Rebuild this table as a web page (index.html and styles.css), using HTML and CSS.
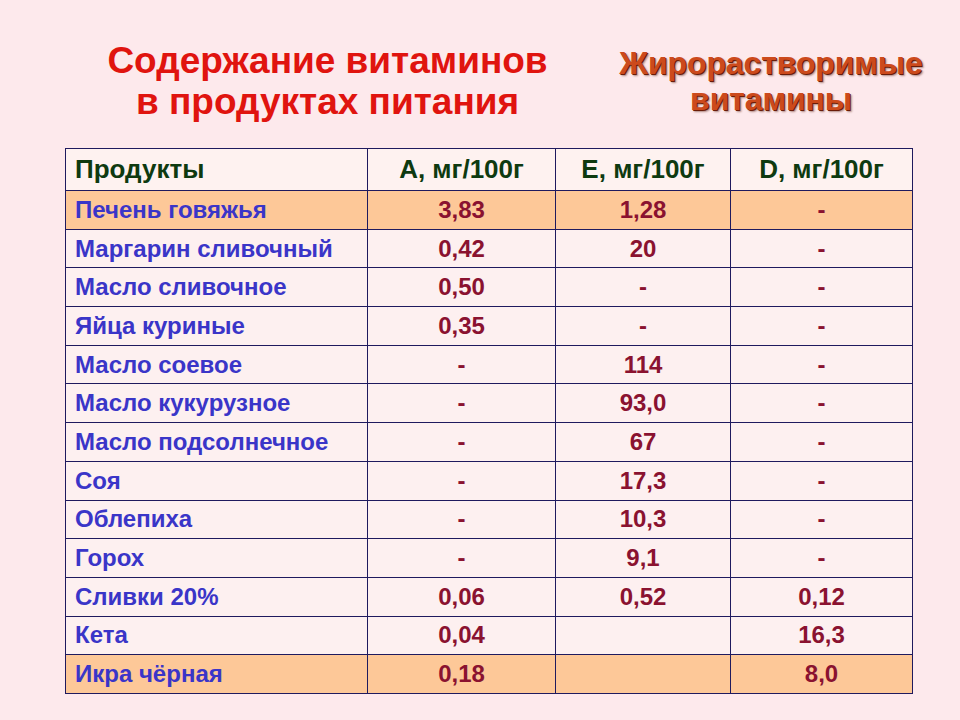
FILE: index.html
```html
<!DOCTYPE html>
<html lang="ru">
<head>
<meta charset="utf-8">
<link rel="stylesheet" href="styles.css">
</head>
<body>
<div class="page">
  <header class="heads">
    <h1 class="title">Содержание витаминов<br>в продуктах питания</h1>
    <h2 class="subtitle">Жирорастворимые<br>витамины</h2>
  </header>
  <table class="vit">
    <colgroup>
      <col class="c1"><col class="c2"><col class="c3"><col class="c4">
    </colgroup>
    <thead>
      <tr><th class="left">Продукты</th><th>А, мг/100г</th><th>Е, мг/100г</th><th>D, мг/100г</th></tr>
    </thead>
    <tbody>
      <tr class="hl"><td>Печень говяжья</td><td>3,83</td><td>1,28</td><td>-</td></tr>
      <tr><td>Маргарин сливочный</td><td>0,42</td><td>20</td><td>-</td></tr>
      <tr><td>Масло сливочное</td><td>0,50</td><td>-</td><td>-</td></tr>
      <tr><td>Яйца куриные</td><td>0,35</td><td>-</td><td>-</td></tr>
      <tr><td>Масло соевое</td><td>-</td><td>114</td><td>-</td></tr>
      <tr><td>Масло кукурузное</td><td>-</td><td>93,0</td><td>-</td></tr>
      <tr><td>Масло подсолнечное</td><td>-</td><td>67</td><td>-</td></tr>
      <tr><td>Соя</td><td>-</td><td>17,3</td><td>-</td></tr>
      <tr><td>Облепиха</td><td>-</td><td>10,3</td><td>-</td></tr>
      <tr><td>Горох</td><td>-</td><td>9,1</td><td>-</td></tr>
      <tr><td>Сливки 20%</td><td>0,06</td><td>0,52</td><td>0,12</td></tr>
      <tr><td>Кета</td><td>0,04</td><td></td><td>16,3</td></tr>
      <tr class="hl"><td>Икра чёрная</td><td>0,18</td><td></td><td>8,0</td></tr>
    </tbody>
  </table>
</div>
</body>
</html>
```
FILE: styles.css
```css
html, body {
  margin: 0;
  padding: 0;
  background: #fde9ec;
}
body {
  font-family: "Liberation Sans", Arial, sans-serif;
  width: 960px;
  height: 720px;
  overflow: hidden;
}
.page {
  padding: 0 0 0 65px;
}
.heads {
  display: flex;
  height: 148px;
}
.title {
  margin: 0;
  width: 525px;
  flex: none;
  padding-top: 40px;
  font-size: 37px;
  line-height: 41px;
  color: #e0140f;
  text-align: center;
  font-weight: bold;
  white-space: nowrap;
  box-sizing: border-box;
}
.subtitle {
  margin: 0 0 0 -19px;
  width: 400px;
  flex: none;
  padding-top: 45px;
  font-size: 31.8px;
  line-height: 36px;
  font-weight: bold;
  text-align: center;
  white-space: nowrap;
  color: #cc4a1c;
  text-shadow: 1px 1px 0 #6a1c08, 2px 2px 2px rgba(80, 20, 0, 0.45);
}
.vit {
  border-collapse: collapse;
  width: 847px;
  table-layout: fixed;
  font-size: 24px;
  font-weight: bold;
}
.c1 { width: 302px; }
.c2 { width: 188px; }
.c3 { width: 175px; }
.c4 { width: 182px; }
.vit th, .vit td {
  border: 1.5px solid #1f1a5e;
  padding: 0 9px;
  height: 38.7px;
  box-sizing: border-box;
  background: #fdf0f0;
  text-align: center;
  color: #8a1230;
  white-space: nowrap;
}
.vit th {
  height: 42px;
  font-size: 26px;
  color: #0e3a10;
  background: #fef2f0;
}
.vit th.left, .vit td:first-child {
  text-align: left;
}
.vit td:first-child {
  color: #3a35c8;
}
.vit tr.hl td {
  background: #fdc898;
}
```
